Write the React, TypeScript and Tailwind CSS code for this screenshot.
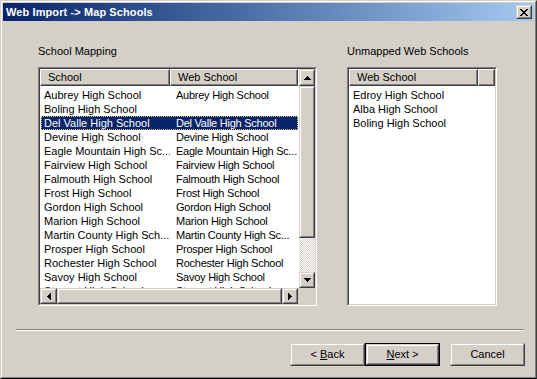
import React from 'react';

const mapping = [
  ['Aubrey High School', 'Aubrey High School'],
  ['Boling High School', ''],
  ['Del Valle High School', 'Del Valle High School'],
  ['Devine High School', 'Devine High School'],
  ['Eagle Mountain High Sc...', 'Eagle Mountain High Sc...'],
  ['Fairview High School', 'Fairview High School'],
  ['Falmouth High School', 'Falmouth High School'],
  ['Frost High School', 'Frost High School'],
  ['Gordon High School', 'Gordon High School'],
  ['Marion High School', 'Marion High School'],
  ['Martin County High Sch...', 'Martin County High Sc...'],
  ['Prosper High School', 'Prosper High School'],
  ['Rochester High School', 'Rochester High School'],
  ['Savoy High School', 'Savoy High School'],
  ['Stewart High School', 'Stewart High School'],
];

const unmapped = ['Edroy High School', 'Alba High School', 'Boling High School'];

// classic raised 3d box
const Raised: React.FC<{ className?: string; children?: React.ReactNode }> = ({ className = '', children }) => (
  <div className={`shrink-0 border border-t-[#d4d0c8] border-l-[#d4d0c8] border-r-[#404040] border-b-[#404040] ${className}`}>
    <div className="w-full h-full border border-t-white border-l-white border-r-[#808080] border-b-[#808080] bg-[#d4d0c8] flex items-center justify-center">
      {children}
    </div>
  </div>
);

const Sunken: React.FC<{ className?: string; children?: React.ReactNode }> = ({ className = '', children }) => (
  <div className={`border border-t-[#808080] border-l-[#808080] border-r-white border-b-white ${className}`}>
    <div className="w-full h-full border border-t-[#404040] border-l-[#404040] border-r-[#d4d0c8] border-b-[#d4d0c8] bg-white flex flex-col overflow-hidden">
      {children}
    </div>
  </div>
);

const HeaderCell: React.FC<{ className?: string; children?: React.ReactNode }> = ({ className = '', children }) => (
  <div className={`shrink-0 h-[17px] border border-t-white border-l-white border-r-[#404040] border-b-[#404040] ${className}`}>
    <div className="w-full h-full border-r border-b border-r-[#808080] border-b-[#808080] bg-[#d4d0c8] pl-[7px] leading-[14px] whitespace-nowrap overflow-hidden">
      {children}
    </div>
  </div>
);

const Arrow: React.FC<{ dir: 'up' | 'down' | 'left' | 'right' }> = ({ dir }) => {
  const pts = {
    up: '3.5,0 7,4 0,4',
    down: '0,0 7,0 3.5,4',
    left: '4,0 4,7 0,3.5',
    right: '0,0 4,3.5 0,7',
  }[dir];
  const vert = dir === 'up' || dir === 'down';
  return (
    <svg width={vert ? 7 : 4} height={vert ? 4 : 7} viewBox={vert ? '0 0 7 4' : '0 0 4 7'} shapeRendering="crispEdges">
      <polygon points={pts} fill="#000" />
    </svg>
  );
};

const Dither = 'bg-[repeating-conic-gradient(#ffffff_0_25%,#d4d0c8_0_50%)] bg-[length:2px_2px]';

export default function App() {
  return (
    <div className="w-[537px] h-[379px] border border-t-[#d4d0c8] border-l-[#d4d0c8] border-r-[#404040] border-b-[#000] font-['Liberation_Sans',Arial,sans-serif] text-[11px] text-black">
      <div className="w-full h-full border border-t-white border-l-white border-r-[#808080] border-b-[#808080] bg-[#d4d0c8] p-px flex flex-col">
        {/* Title bar */}
        <div className="h-[18px] shrink-0 flex items-center justify-between pl-[3px] pr-[2px] bg-gradient-to-r from-[#0a246a] to-[#a6caf0]">
          <span className="text-white font-bold text-[11px] leading-[13px] tracking-[0.1px]">Web Import -&gt; Map Schools</span>
          <Raised className="w-[16px] h-[14px]">
            <svg width="8" height="7" viewBox="0 0 8 7" shapeRendering="crispEdges">
              <path d="M0 0h2v1h-2zM6 0h2v1h-2zM1 1h2v1h-2zM5 1h2v1h-2zM2 2h4v1h-4zM3 3h2v1h-2zM2 4h4v1h-4zM1 5h2v1h-2zM5 5h2v1h-2zM0 6h2v1h-2zM6 6h2v1h-2z" fill="#000" />
            </svg>
          </Raised>
        </div>

        {/* Body */}
        <div className="flex flex-col pt-[24px]">
          <div className="flex gap-[30px] pl-[35px]">
            {/* School Mapping */}
            <div className="flex flex-col w-[279px]">
              <div className="leading-[13px] h-[13px] mb-[9px]">School Mapping</div>
              <Sunken className="h-[239px]">
                <div className="flex flex-1 min-h-0">
                  <div className="flex flex-col w-[259px] overflow-hidden">
                    <div className="flex">
                      <HeaderCell className="w-[130px]">School</HeaderCell>
                      <HeaderCell className="w-[128px]">Web School</HeaderCell>
                    </div>
                    <div className="flex flex-col pt-[2px] pl-px">
                      {mapping.map(([a, b], i) => (
                        <div
                          key={i}
                          className={`flex h-[14px] shrink-0 leading-[14px] whitespace-nowrap w-[257px] ${
                            i === 2 ? 'bg-[#0a246a] text-white outline outline-1 outline-dotted outline-[#d8c878] -outline-offset-1' : ''
                          }`}
                        >
                          <span className="w-[129px] shrink-0 pl-[3px] overflow-hidden">{a}</span>
                          <span className="w-[128px] shrink-0 pl-[6px] tracking-[-0.25px]">{b}</span>
                        </div>
                      ))}
                    </div>
                  </div>
                  {/* vertical scrollbar */}
                  <div className="w-[16px] flex flex-col">
                    <Raised className="w-[16px] h-[17px]"><Arrow dir="up" /></Raised>
                    <Raised className="w-[16px] h-[152px]" />
                    <div className={`flex-1 ${Dither}`} />
                    <Raised className="w-[16px] h-[16px]"><Arrow dir="down" /></Raised>
                  </div>
                </div>
                {/* horizontal scrollbar */}
                <div className="flex h-[16px] shrink-0">
                  <Raised className="w-[17px] h-[16px]"><Arrow dir="left" /></Raised>
                  <Raised className="w-[225px] h-[16px]" />
                  <div className={`flex-1 ${Dither}`} />
                  <Raised className="w-[16px] h-[16px]"><Arrow dir="right" /></Raised>
                  <div className="w-[17px] bg-[#d4d0c8]" />
                </div>
              </Sunken>
            </div>

            {/* Unmapped Web Schools */}
            <div className="flex flex-col w-[150px]">
              <div className="leading-[13px] h-[13px] mb-[9px]">Unmapped Web Schools</div>
              <Sunken className="h-[239px]">
                <div className="flex">
                  <HeaderCell className="w-[129px]">Web School</HeaderCell>
                  <HeaderCell className="w-[17px]" />
                </div>
                <div className="flex flex-col pt-[2px] pl-[4px]">
                  {unmapped.map((s) => (
                    <div key={s} className="h-[14px] leading-[14px] whitespace-nowrap">{s}</div>
                  ))}
                </div>
              </Sunken>
            </div>
          </div>

          {/* separator */}
          <div className="mt-[23px] ml-[13px] mr-[10px] h-[2px] border-t border-t-[#808080] border-b border-b-white" />

          {/* buttons */}
          <div className="flex justify-end mt-[12px] mr-[9px]">
            <Raised className="w-[75px] h-[23px]">
              <span>&lt; <u>B</u>ack</span>
            </Raised>
            <div className="w-[75px] h-[23px] border border-black">
              <Raised className="w-full h-full">
                <span><u>N</u>ext &gt;</span>
              </Raised>
            </div>
            <Raised className="w-[75px] h-[23px] ml-[10px]">
              <span>Cancel</span>
            </Raised>
          </div>
        </div>
      </div>
    </div>
  );
}
